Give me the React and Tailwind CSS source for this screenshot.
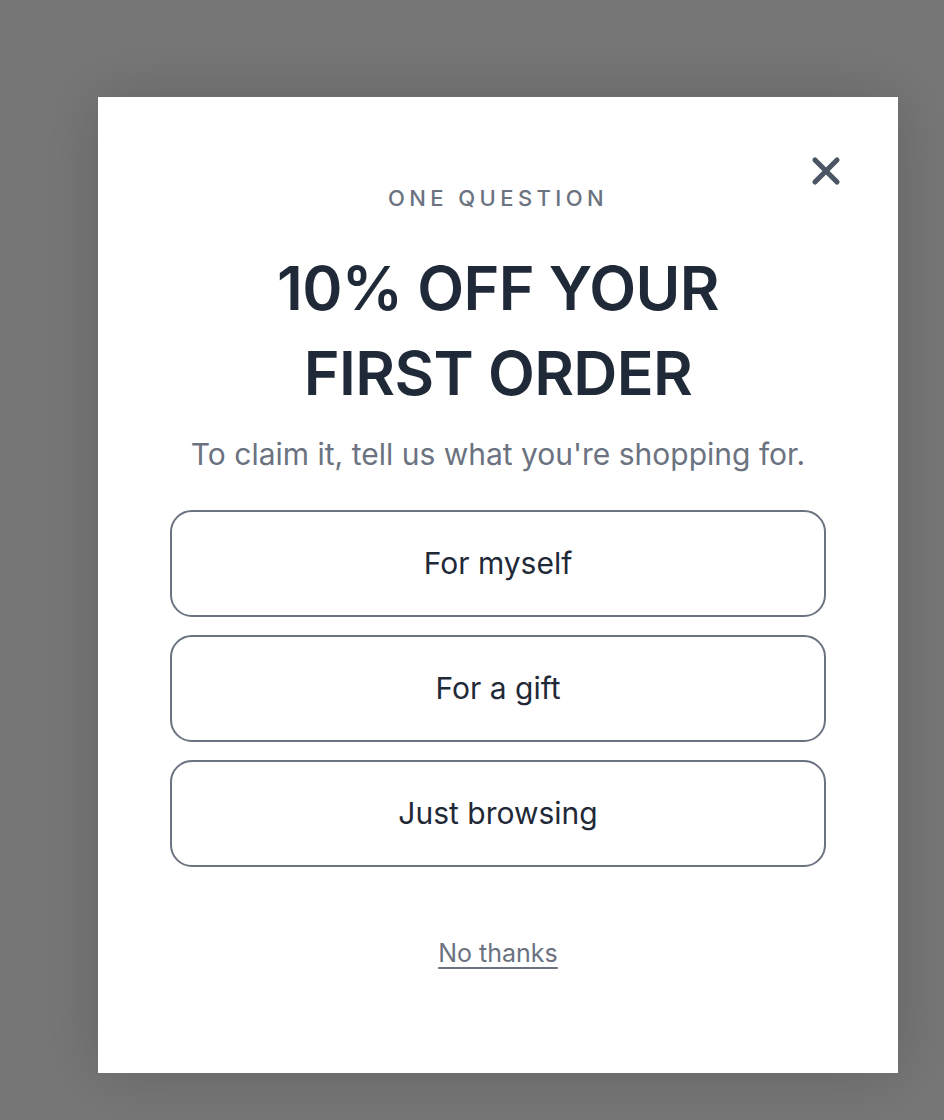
import { X } from "lucide-react";

const options = ["For myself", "For a gift", "Just browsing"];

const App = () => (
  <div
    className="w-full min-h-[1120px] bg-[#777777] pt-[97px] pl-[98px]"
    style={{ fontFamily: "Inter, 'Noto Sans', sans-serif" }}
  >
    <div className="relative w-[800px] h-[976px] bg-white shadow-[0_0_60px_rgba(0,0,0,0.18)] flex flex-col items-center px-[72px] pt-[90px]">
      <button className="absolute top-[52px] right-[50px] text-[#4b5563]">
        <X className="w-[44px] h-[44px]" strokeWidth={2.8} />
      </button>

      <p className="text-[22px] leading-none font-medium tracking-[0.2em] text-[#6b7280]">
        ONE QUESTION
      </p>

      <h1 className="mt-[37px] text-[61px] leading-[85px] font-semibold text-[#1f2937] text-center tracking-[-0.01em]">
        10% OFF YOUR
        <br />
        FIRST ORDER
      </h1>

      <p className="mt-[23px] text-[30px] leading-none text-[#6b7280] text-center">
        To claim it, tell us what you're shopping for.
      </p>

      <div className="mt-[41px] w-full flex flex-col gap-[18px]">
        {options.map((o) => (
          <button
            key={o}
            className="w-full h-[107px] rounded-[22px] border-2 border-[#6b7280] text-[30px] text-[#1f2937]"
          >
            {o}
          </button>
        ))}
      </div>

      <a
        href="#"
        className="mt-[74px] text-[25px] leading-none text-[#6b7280] underline underline-offset-[5px]"
      >
        No thanks
      </a>
    </div>
  </div>
);

export default App;
